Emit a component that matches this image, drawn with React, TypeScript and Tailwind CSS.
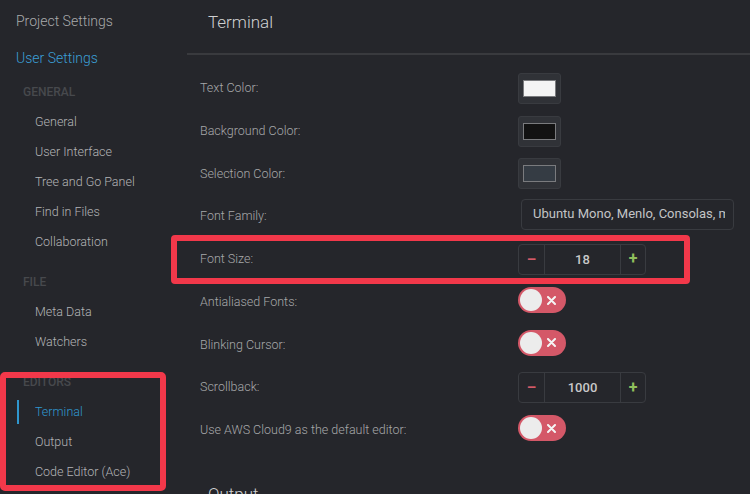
import React from "react"

const font = { fontFamily: "Roboto, 'Open Sans', sans-serif" }

type ColorProp = { color: string }

function Swatch({ color }: ColorProp) {
    return (
        <div className="w-[43px] h-[31px] rounded-[3px] bg-[#303237] border border-[#393b40] flex items-center justify-center">
            <div className="w-[33px] h-[17px] border border-[#7a7b7e]" style={{ backgroundColor: color }} />
        </div>
    )
}

function Toggle() {
    return (
        <div className="w-[48px] h-[26px] rounded-full bg-[#d45868] flex items-center justify-between pl-[2px] pr-[10px]">
            <div className="w-[22px] h-[22px] rounded-full bg-[#ececec]" />
            <svg width="9" height="9" viewBox="0 0 9 9">
                <path d="M1 1 L8 8 M8 1 L1 8" stroke="#f5f5f5" strokeWidth="2" strokeLinecap="round" />
            </svg>
        </div>
    )
}

function Stepper({ value }: { value: string }) {
    return (
        <div className="flex w-[128px] h-[31px] border border-[#393b40] rounded-[4px]">
            <div className="w-[26px] flex items-center justify-center border-r border-[#393b40] text-[#d35a68] text-[15px] font-bold">–</div>
            <div className="flex-1 flex items-center justify-center text-[#c9c9c9] text-[13px] font-medium">{value}</div>
            <div className="w-[25px] flex items-center justify-center border-l border-[#393b40] text-[#8fbf5c] text-[16px] font-bold">+</div>
        </div>
    )
}

type RowProp = { label: string; children: React.ReactNode }

function Row({ label, children }: RowProp) {
    return (
        <div className="flex items-center h-[42.75px] shrink-0">
            <div className="w-[331px] pl-[13px] text-[12.5px] text-[#a7a8aa] font-light">{label}</div>
            <div className="flex items-center">{children}</div>
        </div>
    )
}

function SideItem({ label, active }: { label: string; active?: boolean }) {
    return (
        <div className="relative h-[30px] shrink-0 flex items-center pl-[35px]">
            {active && <div className="absolute left-[17px] top-[3px] w-[2px] h-[24px] bg-[#2f97cf]" />}
            <span className={`text-[12.5px] font-light ${active ? "text-[#2f97cf]" : "text-[#b3b4b6]"}`}>{label}</span>
        </div>
    )
}

function SideHead({ label }: { label: string }) {
    return (
        <div className="h-[30px] shrink-0 flex items-center pl-[23px] text-[12px] text-[#47494d] font-medium">{label}</div>
    )
}

export default function App() {
    return (
        <div className="relative w-[750px] h-[494px] overflow-hidden bg-[#25262b] flex" style={font}>
            {/* sidebar */}
            <div className="w-[187px] shrink-0 flex flex-col">
                <div className="h-[42px] shrink-0 flex items-center pl-4 text-[14px] text-[#a9aaac] font-light">Project Settings</div>
                <div className="h-[35px] shrink-0 flex items-start pt-[6px] pl-4 text-[14px] text-[#3b9fd6] font-light">User Settings</div>
                <SideHead label="GENERAL" />
                <SideItem label="General" />
                <SideItem label="User Interface" />
                <SideItem label="Tree and Go Panel" />
                <SideItem label="Find in Files" />
                <SideItem label="Collaboration" />
                <div className="h-[10px] shrink-0" />
                <SideHead label="FILE" />
                <SideItem label="Meta Data" />
                <SideItem label="Watchers" />
                <div className="h-[10px] shrink-0" />
                <SideHead label="EDITORS" />
                <SideItem label="Terminal" active />
                <SideItem label="Output" />
                <SideItem label="Code Editor (Ace)" />
            </div>

            {/* main panel */}
            <div className="flex-1 flex flex-col">
                <div className="h-[55px] shrink-0 flex items-start pt-[10px] pl-[21px] text-[17px] text-[#cfd0d1] font-light border-b-2 border-[#393a3e]">Terminal</div>
                <div className="h-[12px] shrink-0" />
                <Row label="Text Color:"><Swatch color="#f4f4f4" /></Row>
                <Row label="Background Color:"><Swatch color="#121212" /></Row>
                <Row label="Selection Color:"><Swatch color="#353c44" /></Row>
                <Row label="Font Family:">
                    <div className="ml-[3px] w-[213px] h-[31px] border border-[#393b40] rounded-[4px] flex items-center pl-[11px] pr-[8px] -mt-[5px]">
                        <div className="overflow-hidden whitespace-nowrap text-[13px] text-[#c3c4c6]">Ubuntu Mono, Menlo, Consolas, monospace</div>
                    </div>
                </Row>
                <Row label="Font Size:"><Stepper value="18" /></Row>
                <Row label="Antialiased Fonts:"><div className="-mt-[4px]"><Toggle /></div></Row>
                <Row label="Blinking Cursor:"><div className="-mt-[4px]"><Toggle /></div></Row>
                <Row label="Scrollback:"><Stepper value="1000" /></Row>
                <Row label="Use AWS Cloud9 as the default editor:"><div className="-mt-[4px]"><Toggle /></div></Row>
                <div className="h-[30px] shrink-0" />
                <div className="pl-[21px] text-[17px] text-[#cfd0d1] font-light shrink-0">Output</div>
            </div>

            {/* annotation boxes */}
            <div className="absolute left-0 top-[372px] w-[166px] h-[119px] border-[6px] border-[#f2384a] rounded-[5px]" />
            <div className="absolute left-[171px] top-[235px] w-[519px] h-[49px] border-[6px] border-[#f2384a] rounded-[4px]" />
        </div>
    )
}
